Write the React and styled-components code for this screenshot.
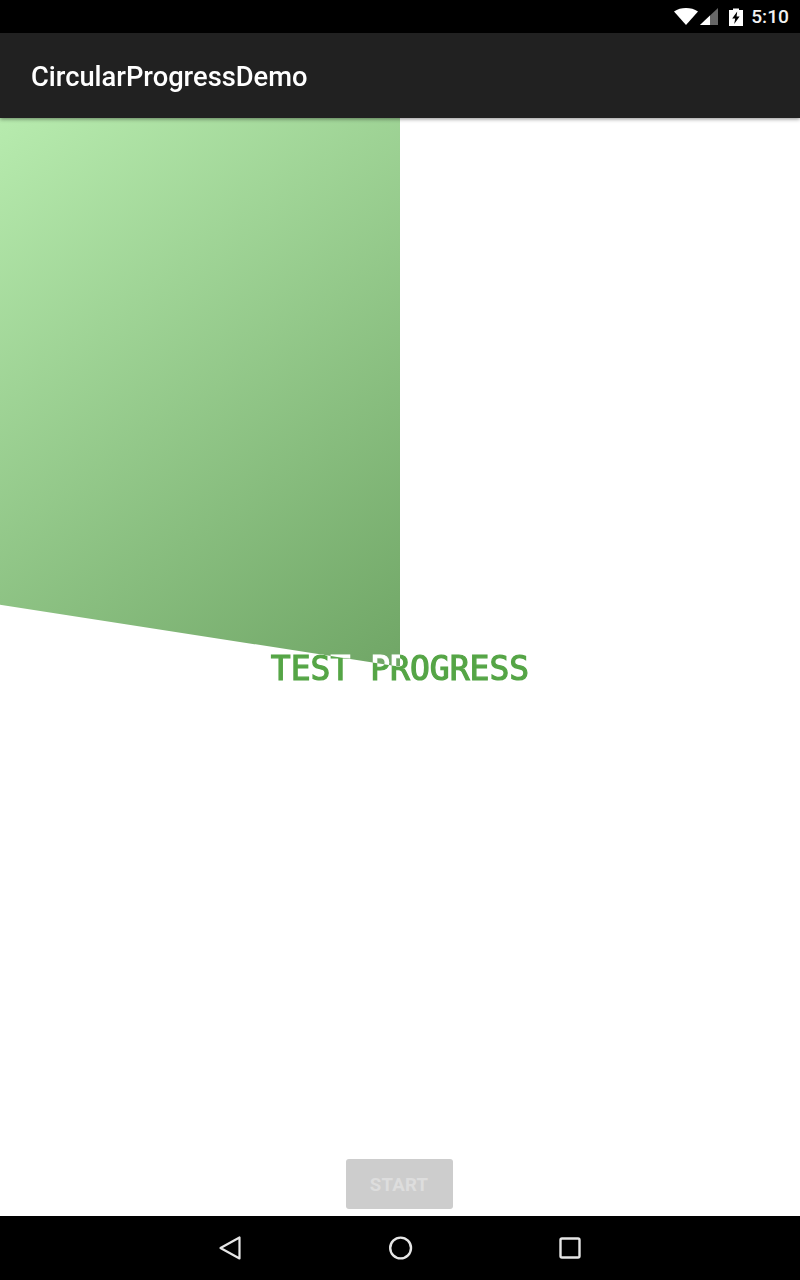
import React from "react";
import styled, { createGlobalStyle } from "styled-components";

const Global = createGlobalStyle`
  html, body { margin: 0; padding: 0; background: #fff; }
  #root { width: 800px; height: 1280px; }
`;
const Screen = styled.div`
  width: 800px; height: 1280px; display: flex; flex-direction: column; overflow: hidden;
  font-family: Roboto, sans-serif; background: #fff;
`;
const StatusBar = styled.div`
  height: 33px; background: #000; display: flex; align-items: center; justify-content: flex-end;
  padding-right: 11px; color: #fff; box-sizing: border-box;
`;
const Clock = styled.span`
  font-size: 19.2px; font-weight: 500; margin-left: 8px; color: #f2f2f2; line-height: 33px;
`;
const SignalIcon = styled.svg` margin-left: 2px; `;
const BatteryIcon = styled.svg` margin-left: 11px; `;
const AppBar = styled.header`
  height: 85px; background: #212121; display: flex; align-items: center; padding-left: 31px;
  padding-top: 2px; box-sizing: border-box; position: relative; z-index: 2;
  box-shadow: 0 1px 4px rgba(0,0,0,.45);
`;
const Title = styled.h1`
  margin: 0; font-size: 27.3px; font-weight: 500; color: #fff;
`;
const Content = styled.main`
  flex: 1; position: relative; display: flex; flex-direction: column; align-items: center;
`;
const Sweep = styled.svg`
  position: absolute; left: 0; top: 0; width: 800px; height: 1098px;
`;
const Label = styled.div`
  position: absolute; left: 0; right: 0; top: 530px; height: 42px; line-height: 42px; text-align: center;
  font-family: "DejaVu Sans Mono", monospace; font-weight: 400; font-size: 33px;
  -webkit-text-stroke: 1.2px ${p => p.$inverse ? "#fff" : "#55a546"};
  color: ${p => p.$inverse ? "#fff" : "#55a546"};
  will-change: transform;
  clip-path: ${p => p.$inverse ? "polygon(0 -530px, 400px -530px, 400px 18.7px, 0 -43.3px)" : "none"};
`;
const Spacer = styled.div` flex: 1; `;
const StartButton = styled.button`
  width: 107px; height: 50px; margin: 0 1px 7px 0; border: 0; border-radius: 3px; background: #cdcdcd;
  color: #dddddd; font: 700 18.6px Roboto, sans-serif; letter-spacing: .2px; padding: 2px 1px 0 0;
`;
const NavBar = styled.nav`
  height: 64px; background: #000; display: flex; align-items: center; justify-content: center;
`;
const NavSlot = styled.div`
  width: 170px; display: flex; justify-content: center; align-items: center; height: 100%;
`;

export default function App() {
  return (
    <Screen>
      <Global />
      <StatusBar>
        <svg width="24" height="17" viewBox="0 0 24 17"><path d="M0 3.4C6.8 -1.1 17.2 -1.1 24 3.4L12 17Z" fill="#fff" /></svg>
        <SignalIcon width="18" height="17" viewBox="0 0 18 17">
          <path d="M18 0V17H0Z" fill="#666" />
          <path d="M10 7.5V17H0Z" fill="#fff" />
        </SignalIcon>
        <BatteryIcon width="14" height="18" viewBox="0 0 14 18">
          <path d="M4 0.5H10V2H14V18H0V2H4Z" fill="#fff" />
          <path d="M8.2 3.5L3.2 10.5H6.2L5.2 16L10.6 8.5H7.6Z" fill="#000" />
        </BatteryIcon>
        <Clock>5:10</Clock>
      </StatusBar>
      <AppBar><Title>CircularProgressDemo</Title></AppBar>
      <Content>
        <Label>TEST PROGRESS</Label>
        <Sweep viewBox="0 0 800 1098">
          <defs>
            <linearGradient id="g" gradientUnits="userSpaceOnUse" x1="0" y1="0" x2="400" y2="548">
              <stop offset="0" stopColor="#b7ebae" />
              <stop offset="1" stopColor="#70a666" />
            </linearGradient>
          </defs>
          <path d="M0 0H400V548.7L0 486.7Z" fill="url(#g)" />
        </Sweep>
        <Label $inverse>TEST PROGRESS</Label>
        <Spacer />
        <StartButton>START</StartButton>
      </Content>
      <NavBar>
        <NavSlot>
          <svg width="24" height="26" viewBox="0 0 24 26"><path d="M21.5 2.5V23.5L2.5 13Z" fill="none" stroke="#e6e6e6" strokeWidth="2.2" strokeLinejoin="round" /></svg>
        </NavSlot>
        <NavSlot>
          <svg width="26" height="26" viewBox="0 0 26 26"><circle cx="13.6" cy="13" r="10.4" fill="none" stroke="#e6e6e6" strokeWidth="2.4" /></svg>
        </NavSlot>
        <NavSlot>
          <svg width="24" height="24" viewBox="0 0 24 24"><rect x="2.5" y="2.5" width="19" height="19" rx="1.5" fill="none" stroke="#e6e6e6" strokeWidth="2.4" /></svg>
        </NavSlot>
      </NavBar>
    </Screen>
  );
}
